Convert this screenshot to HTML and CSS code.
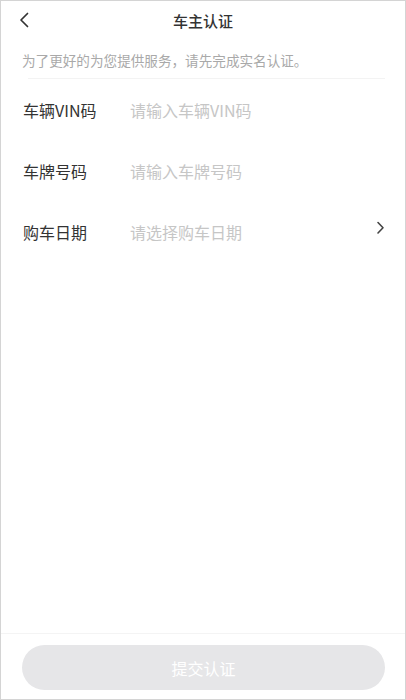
FILE: index.html
```html
<!DOCTYPE html>
<html lang="zh-CN">
<head>
<meta charset="utf-8">
<title>车主认证</title>
<link rel="stylesheet" href="styles.css">
</head>
<body>
<div class="page">
  <header class="header">
    <div class="back">
      <svg width="12" height="16" viewBox="0 0 12 16"><polyline points="9.5,1.5 3,8 9.5,14.5" fill="none" stroke="#333" stroke-width="1.7" stroke-linecap="round" stroke-linejoin="round"/></svg>
    </div>
    <div class="title">车主认证</div>
    <div></div>
  </header>
  <main class="content">
    <p class="tip">为了更好的为您提供服务，请先完成实名认证。</p>
    <div class="divider"></div>
    <div class="row">
      <span class="label">车辆VIN码</span>
      <span class="placeholder">请输入车辆VIN码</span>
    </div>
    <div class="row">
      <span class="label">车牌号码</span>
      <span class="placeholder">请输入车牌号码</span>
    </div>
    <div class="row">
      <span class="label">购车日期</span>
      <span class="placeholder">请选择购车日期</span>
      <svg class="arrow" width="9" height="14" viewBox="0 0 9 14"><polyline points="2,1.5 7,6.8 2,12" fill="none" stroke="#444" stroke-width="1.6" stroke-linecap="round" stroke-linejoin="round"/></svg>
    </div>
  </main>
  <footer class="footer">
    <div class="submit">提交认证</div>
  </footer>
</div>
</body>
</html>
```
FILE: styles.css
```css
html, body {
  margin: 0;
  padding: 0;
  background: #fff;
}
body {
  font-family: "Noto Sans CJK SC", "Noto Sans", sans-serif;
}
.page {
  width: 406px;
  height: 700px;
  box-sizing: border-box;
  border: 1px solid #d4d4d4;
  display: flex;
  flex-direction: column;
  background: #fff;
}
.header {
  height: 40px;
  display: grid;
  grid-template-columns: 1fr auto 1fr;
  align-items: center;
}
.back {
  padding-left: 17px;
  display: flex;
  align-items: center;
  height: 40px;
  margin-top: -2px;
}
.title {
  font-size: 15px;
  font-weight: 500;
  color: #333;
  line-height: 40px;
}
.content {
  flex: 1;
}
.tip {
  margin: 9px 0 0 0;
  padding-left: 21px;
  font-size: 13.6px;
  line-height: 20px;
  color: #a9a9a9;
}
.divider {
  margin: 8px 20px 0 27px;
  height: 1px;
  background: #f3f3f3;
}
.row {
  height: 61px;
  display: flex;
  align-items: center;
  padding: 0 20px 0 22px;
}
.label {
  width: 107px;
  font-size: 16px;
  color: #333;
}
.placeholder {
  flex: 1;
  font-size: 16px;
  color: #c6c6c6;
}
.arrow {
  margin-top: -8px;
  margin-right: 0;
}
.footer {
  border-top: 1px solid #f4f4f4;
  padding: 11px 20px 9px 21px;
}
.submit {
  height: 45px;
  border-radius: 23px;
  background: #e6e6e8;
  color: #fff;
  font-size: 16px;
  display: flex;
  align-items: center;
  justify-content: center;
}
```
